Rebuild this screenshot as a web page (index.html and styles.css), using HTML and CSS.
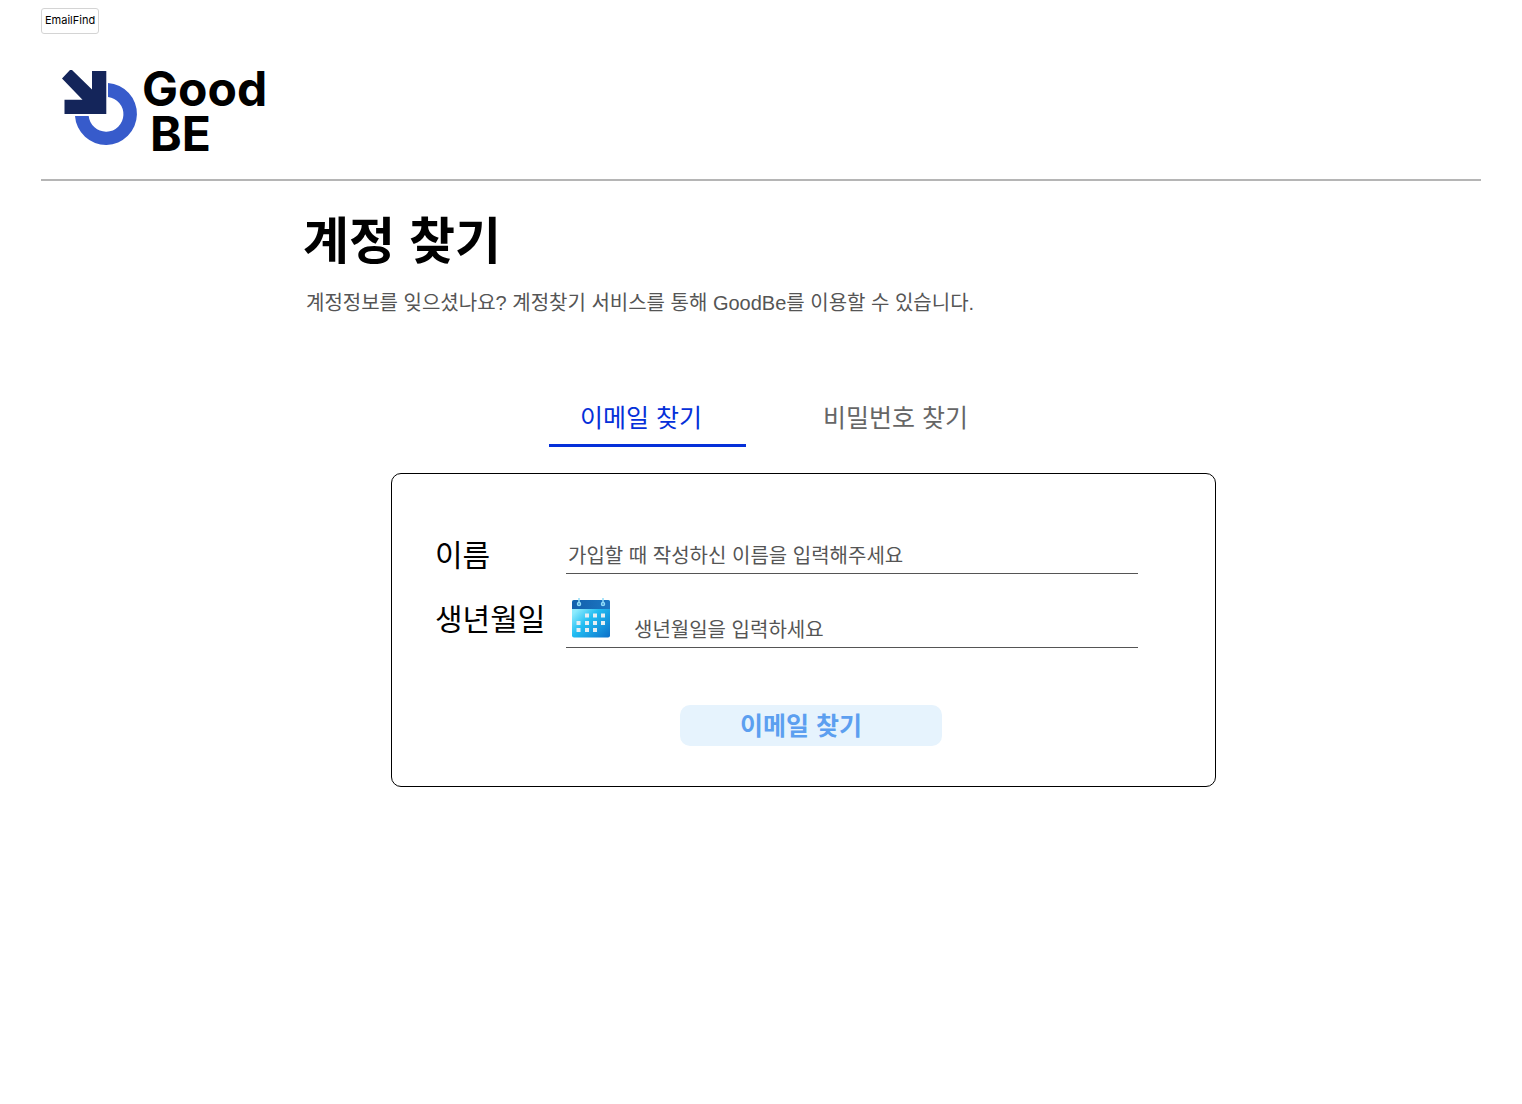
FILE: index.html
```html
<!DOCTYPE html>
<html lang="ko">
<head>
<meta charset="utf-8">
<meta name="viewport" content="width=device-width, initial-scale=1">
<title>EmailFind</title>
<link rel="stylesheet" href="styles.css">
</head>
<body>
<div class="page">
  <span class="tag">EmailFind</span>
  <header class="header">
    <a class="logo" href="#">
      <svg class="logo-mark" width="76" height="78" viewBox="0 0 76 78" aria-hidden="true">
        <path d="M46 13A31 31 0 1 1 13 46H26.700A17.400 17.400 0 1 0 46 27Z" fill="#375bcb"/>
        <path d="M0 8.500L8 0H10L30 19.500V1H44.300V44H2.500V29.700H20.500Z" fill="#14255a"/>
      </svg>
      <span class="logo-text"><span>Good</span><span class="logo-second">BE</span></span>
    </a>
  </header>
  <main class="main">
    <h1 class="title">계정 찾기</h1>
    <p class="lead">계정정보를 잊으셨나요? 계정찾기 서비스를 통해 GoodBe를 이용할 수 있습니다.</p>
    <nav class="tabs">
      <a class="tab tab-active" href="#">이메일 찾기</a>
      <a class="tab" href="#">비밀번호 찾기</a>
    </nav>
    <form class="card">
      <div class="row">
        <label class="label" for="name">이름</label>
        <div class="field"><input class="input" id="name" type="text" placeholder="가입할 때 작성하신 이름을 입력해주세요"></div>
      </div>
      <div class="row">
        <label class="label" for="birth">생년월일</label>
        <div class="field field-date">
          <svg class="calendar" width="40" height="42" viewBox="0 0 40 42" aria-hidden="true">
            <defs>
              <linearGradient id="sheet" x1="0" y1="0" x2="1" y2="1">
                <stop offset="0" stop-color="#a4f0ff"/>
                <stop offset=".2" stop-color="#8aeafd"/>
                <stop offset=".48" stop-color="#22bdf2"/>
                <stop offset="1" stop-color="#0d6fc9"/>
              </linearGradient>
              <linearGradient id="band" x1="0" y1="0" x2="1" y2="0">
                <stop offset="0" stop-color="#1260ac"/>
                <stop offset="1" stop-color="#1d76c2"/>
              </linearGradient>
            </defs>
            <rect x="1" y="2" width="38" height="37.500" rx="2" fill="url(#sheet)"/>
            <path d="M1 11V4a2 2 0 0 1 2-2h34a2 2 0 0 1 2 2v7z" fill="url(#band)"/>
            <g fill="none" stroke="#8fdcf8" stroke-width="1.500">
              <path d="M8 0V5"/><circle cx="8" cy="6" r="1.500"/>
              <path d="M32 0V5"/><circle cx="32" cy="6" r="1.500"/>
            </g>
            <path fill="#e6eef3" d="M14 15.500h4v4h-4zM22 15.500h4v4h-4zM30 15.500h4v4h-4zM5.500 23h4v4h-4zM14 23h4v4h-4zM22 23h4v4h-4zM30 23h4v4h-4zM5.500 30h4v4h-4zM14 30h4v4h-4zM22 30h4v4h-4z"/>
          </svg>
          <input class="input" id="birth" type="text" placeholder="생년월일을 입력하세요">
        </div>
      </div>
      <button class="submit" type="submit">이메일 찾기</button>
    </form>
  </main>
</div>
</body>
</html>
```

FILE: styles.css
```css
* { box-sizing: border-box; }

body {
  margin: 0;
  background: #fff;
  color: #000;
  font-family: "Liberation Sans", "Noto Sans CJK KR", sans-serif;
}

.page { padding: 8px 41px 40px; }

.tag {
  display: block;
  width: fit-content;
  padding: 0 3px 2px;
  border: 1px solid #d4d4d4;
  border-radius: 3px;
  font: 11px/22px Inter, sans-serif;
}

.header {
  padding: 32px 21px 23px;
  border-bottom: 2px solid #b5b5b5;
}

.logo {
  display: flex;
  gap: 4px;
  width: fit-content;
  color: #000;
  text-decoration: none;
}

.logo-mark { margin-top: 4px; }

.logo-text {
  display: flex;
  flex-direction: column;
  font: 700 48px/45px Inter, sans-serif;
}

.logo-second { padding-left: 8px; }

.main { padding: 25px 0 0 262px; }

.title {
  margin: 0;
  font-size: 50px;
  font-weight: 700;
  line-height: 72px;
}

.lead {
  margin: 10px 0 0;
  padding-left: 3px;
  color: #555;
  font-size: 20px;
  line-height: 30px;
}

.tabs {
  display: flex;
  gap: 51px;
  margin: 80px 0 0 246px;
}

.tab {
  width: 197px;
  padding-bottom: 6px;
  border-bottom: 3px solid transparent;
  color: #666;
  font-size: 25px;
  line-height: 40px;
  text-align: center;
  text-decoration: none;
}

.tab-active {
  padding-right: 13px;
  border-color: #0530d9;
  color: #0530d9;
}

.card {
  display: flex;
  flex-direction: column;
  gap: 24px;
  max-width: 825px;
  margin: 26px 0 0 88px;
  padding: 60px 77px 40px 43px;
  border: 1px solid #000;
  border-radius: 10px;
}

.row {
  display: grid;
  grid-template-columns: 131px 1fr;
}

.label {
  font: 30px/38px "Noto Sans CJK KR", sans-serif;
}

.field {
  display: flex;
  height: 40px;
  padding-left: 2px;
  border-bottom: 1px solid #555;
}

.field-date {
  gap: 23px;
  height: 50px;
  padding-left: 5px;
}

.calendar { flex: none; }

.input {
  flex: 1;
  align-self: flex-end;
  min-width: 0;
  height: 38px;
  padding: 0;
  border: 0;
  outline: 0;
  background: none;
  color: #000;
  font: 20px/30px "Noto Sans CJK KR", sans-serif;
}

.input::placeholder { color: #555; opacity: 1; }

.submit {
  width: 262px;
  height: 41px;
  margin: 33px 0 0 245px;
  padding: 0 20px 0 0;
  border: 0;
  border-radius: 10px;
  background: #e6f3fd;
  color: #5c9ff0;
  font: 700 25px/38px "Liberation Sans", "Noto Sans CJK KR", sans-serif;
}
```
